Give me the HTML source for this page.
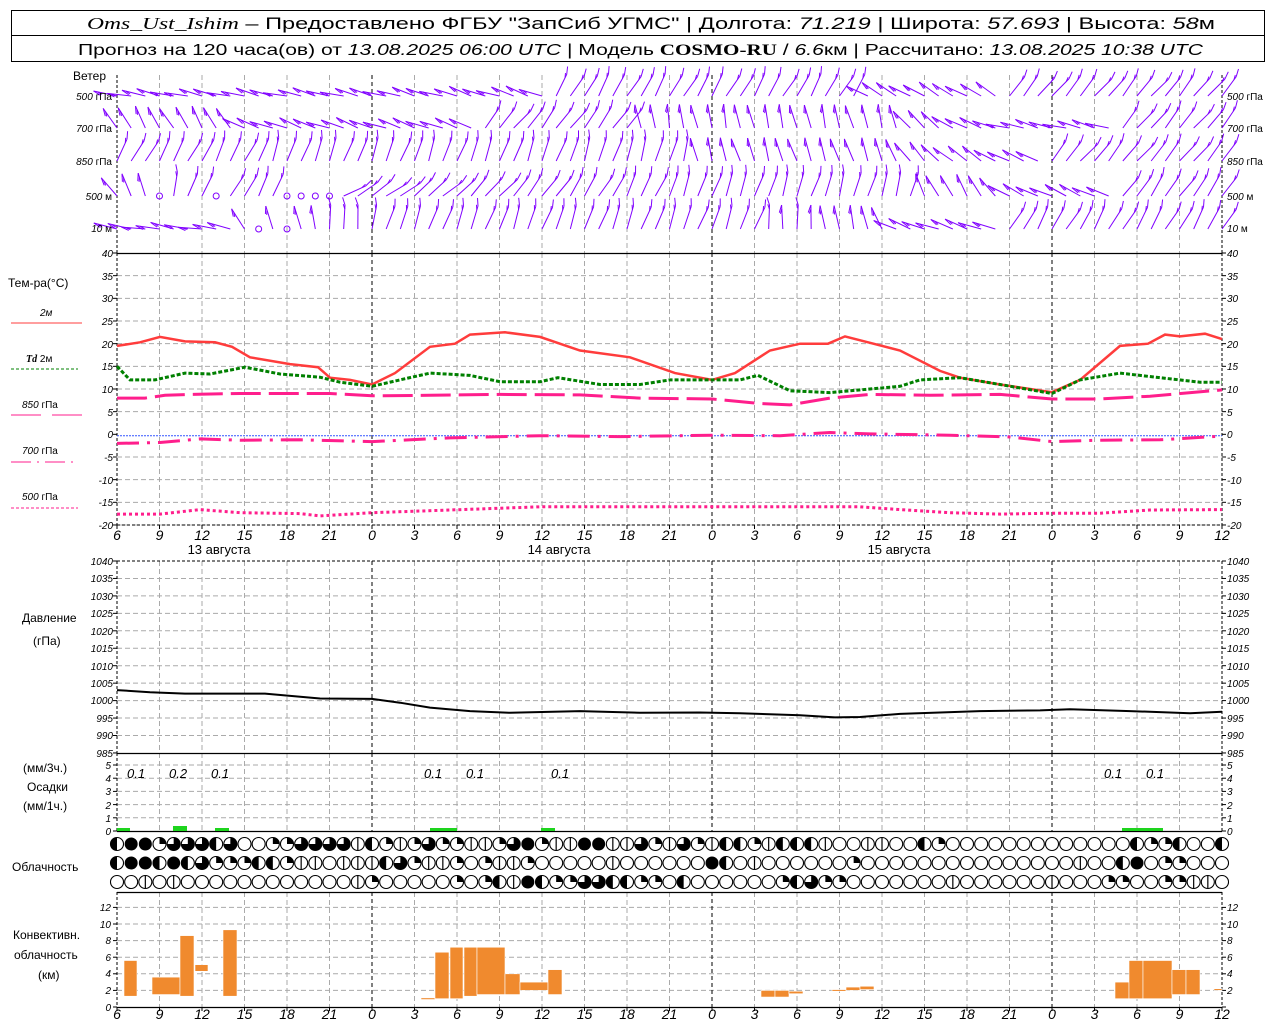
<!DOCTYPE html>
<html><head><meta charset="utf-8">
<style>
html,body{margin:0;padding:0;background:#fff;}
svg{display:block;}
text{font-family:"Liberation Sans","DejaVu Sans",sans-serif;fill:#000;}
.ax{font-size:10px;font-style:italic;}
.tm{font-size:14px;font-style:italic;}
.lb{font-size:12px;}
.h{font-size:17px;}
.h2{font-size:16px;}
</style></head>
<body>
<svg id="s" width="1280" height="1024" viewBox="0 0 1280 1024" xmlns="http://www.w3.org/2000/svg">
<rect x="0" y="0" width="1280" height="1024" fill="#fff"/>
<rect x="11.5" y="10.5" width="1253" height="51" fill="none" stroke="#000"/>
<line x1="11" y1="35.5" x2="1264" y2="35.5" stroke="#000"/>
<text x="87" y="29" class="h" textLength="1128" lengthAdjust="spacingAndGlyphs"><tspan font-family="Liberation Serif" font-style="italic">Oms_Ust_Ishim</tspan> – Предоставлено ФГБУ "ЗапСиб УГМС" | Долгота: <tspan font-style="italic">71.219</tspan> | Широта: <tspan font-style="italic">57.693</tspan> | Высота: <tspan font-style="italic">58</tspan>м</text>
<text x="78" y="55" class="h2" textLength="1125" lengthAdjust="spacingAndGlyphs">Прогноз на 120 часа(ов) от <tspan font-style="italic">13.08.2025 06:00 UTC</tspan>  | Модель <tspan font-family="Liberation Serif" font-weight="bold">COSMO-RU</tspan> / <tspan font-style="italic">6.6</tspan>км | Рассчитано: <tspan font-style="italic">13.08.2025 10:38 UTC</tspan></text>

<g id="grid"></g>
<g id="data"></g>

<text x="73" y="80" class="lb">Ветер</text>
<g class="ax">
<text x="112" y="100" text-anchor="end">500 <tspan font-style="normal">гПа</tspan></text>
<text x="112" y="132" text-anchor="end">700 <tspan font-style="normal">гПа</tspan></text>
<text x="112" y="165" text-anchor="end">850 <tspan font-style="normal">гПа</tspan></text>
<text x="112" y="200" text-anchor="end">500 <tspan font-style="normal">м</tspan></text>
<text x="112" y="232" text-anchor="end">10 <tspan font-style="normal">  м</tspan></text>
<text x="1227" y="100">500 <tspan font-style="normal">гПа</tspan></text>
<text x="1227" y="132">700 <tspan font-style="normal">гПа</tspan></text>
<text x="1227" y="165">850 <tspan font-style="normal">гПа</tspan></text>
<text x="1227" y="200">500 <tspan font-style="normal">м</tspan></text>
<text x="1227" y="232">10 <tspan font-style="normal">  м</tspan></text>
</g>
<text x="8" y="287" class="lb">Тем-ра(°C)</text>
<text x="40" y="316" class="ax" font-style="normal">2м</text>
<line x1="11" y1="323" x2="82" y2="323" stroke="#ff3c3c"/>
<text x="26" y="362" class="ax"><tspan font-family="Liberation Serif" font-weight="bold">Td</tspan> <tspan font-style="normal">  2м</tspan></text>
<line x1="11" y1="369" x2="78" y2="369" stroke="#008000" stroke-dasharray="3 2"/>
<text x="22" y="408" class="ax">850 <tspan font-style="normal"> гПа</tspan></text>
<line x1="11" y1="415" x2="41" y2="415" stroke="#ff1e8c"/><line x1="52" y1="415" x2="82" y2="415" stroke="#ff1e8c"/>
<text x="22" y="454" class="ax">700 <tspan font-style="normal">гПа</tspan></text>
<line x1="11" y1="462" x2="78" y2="462" stroke="#ff1e8c" stroke-dasharray="20 6 2 6"/>
<text x="22" y="500" class="ax">500 <tspan font-style="normal">гПа</tspan></text>
<line x1="11" y1="508" x2="78" y2="508" stroke="#ff1e8c" stroke-dasharray="3 2"/>
<text x="22" y="622" class="lb">Давление</text>
<text x="33" y="645" class="lb">(гПа)</text>
<text x="23" y="772" class="lb">(мм/3ч.)</text>
<text x="27" y="791" class="lb">Осадки</text>
<text x="23" y="810" class="lb">(мм/1ч.)</text>
<text x="12" y="871" class="lb">Облачность</text>
<text x="13" y="939" class="lb">Конвективн.</text>
<text x="14" y="959" class="lb">облачность</text>
<text x="38" y="979" class="lb">(км)</text>

<g class="ax">
<text x="113" y="257" text-anchor="end">40</text><text x="113" y="280" text-anchor="end">35</text><text x="113" y="302" text-anchor="end">30</text><text x="113" y="325" text-anchor="end">25</text><text x="113" y="348" text-anchor="end">20</text><text x="113" y="370" text-anchor="end">15</text><text x="113" y="393" text-anchor="end">10</text><text x="113" y="416" text-anchor="end">5</text><text x="113" y="438" text-anchor="end">0</text><text x="113" y="461" text-anchor="end">-5</text><text x="113" y="484" text-anchor="end">-10</text><text x="113" y="506" text-anchor="end">-15</text><text x="113" y="529" text-anchor="end">-20</text>
<text x="1227" y="257">40</text><text x="1227" y="280">35</text><text x="1227" y="302">30</text><text x="1227" y="325">25</text><text x="1227" y="348">20</text><text x="1227" y="370">15</text><text x="1227" y="393">10</text><text x="1227" y="416">5</text><text x="1227" y="438">0</text><text x="1227" y="461">-5</text><text x="1227" y="484">-10</text><text x="1227" y="506">-15</text><text x="1227" y="529">-20</text>
<text x="113" y="565" text-anchor="end">1040</text><text x="113" y="582" text-anchor="end">1035</text><text x="113" y="600" text-anchor="end">1030</text><text x="113" y="617" text-anchor="end">1025</text><text x="113" y="635" text-anchor="end">1020</text><text x="113" y="652" text-anchor="end">1015</text><text x="113" y="670" text-anchor="end">1010</text><text x="113" y="687" text-anchor="end">1005</text><text x="113" y="704" text-anchor="end">1000</text><text x="113" y="722" text-anchor="end">995</text><text x="113" y="739" text-anchor="end">990</text><text x="113" y="757" text-anchor="end">985</text>
<text x="1227" y="565">1040</text><text x="1227" y="582">1035</text><text x="1227" y="600">1030</text><text x="1227" y="617">1025</text><text x="1227" y="635">1020</text><text x="1227" y="652">1015</text><text x="1227" y="670">1010</text><text x="1227" y="687">1005</text><text x="1227" y="704">1000</text><text x="1227" y="722">995</text><text x="1227" y="739">990</text><text x="1227" y="757">985</text>
<text x="111" y="769" text-anchor="end">5</text><text x="111" y="782" text-anchor="end">4</text><text x="111" y="795" text-anchor="end">3</text><text x="111" y="809" text-anchor="end">2</text><text x="111" y="822" text-anchor="end">1</text><text x="111" y="835" text-anchor="end">0</text>
<text x="1227" y="769">5</text><text x="1227" y="782">4</text><text x="1227" y="795">3</text><text x="1227" y="809">2</text><text x="1227" y="822">1</text><text x="1227" y="835">0</text>
<text x="111" y="911" text-anchor="end">12</text><text x="111" y="928" text-anchor="end">10</text><text x="111" y="944" text-anchor="end">8</text><text x="111" y="961" text-anchor="end">6</text><text x="111" y="977" text-anchor="end">4</text><text x="111" y="994" text-anchor="end">2</text><text x="111" y="1011" text-anchor="end">0</text>
<text x="1227" y="911">12</text><text x="1227" y="928">10</text><text x="1227" y="944">8</text><text x="1227" y="961">6</text><text x="1227" y="977">4</text><text x="1227" y="994">2</text>
</g>
<g class="tm" style="font-size:13px">
<text x="127" y="778">0.1</text><text x="169" y="778">0.2</text><text x="211" y="778">0.1</text><text x="424" y="778">0.1</text><text x="466" y="778">0.1</text><text x="551" y="778">0.1</text><text x="1104" y="778">0.1</text><text x="1146" y="778">0.1</text>
</g>
<g class="tm" text-anchor="middle">
<text x="117" y="540">6</text><text x="159.5" y="540">9</text><text x="202" y="540">12</text><text x="244.5" y="540">15</text><text x="287" y="540">18</text><text x="329.5" y="540">21</text><text x="372" y="540">0</text><text x="414.5" y="540">3</text><text x="457" y="540">6</text><text x="499.5" y="540">9</text><text x="542" y="540">12</text><text x="584.5" y="540">15</text><text x="627" y="540">18</text><text x="669.5" y="540">21</text><text x="712" y="540">0</text><text x="754.5" y="540">3</text><text x="797" y="540">6</text><text x="839.5" y="540">9</text><text x="882" y="540">12</text><text x="924.5" y="540">15</text><text x="967" y="540">18</text><text x="1009.5" y="540">21</text><text x="1052" y="540">0</text><text x="1094.5" y="540">3</text><text x="1137" y="540">6</text><text x="1179.5" y="540">9</text><text x="1222" y="540">12</text>
<text x="117" y="1019">6</text><text x="159.5" y="1019">9</text><text x="202" y="1019">12</text><text x="244.5" y="1019">15</text><text x="287" y="1019">18</text><text x="329.5" y="1019">21</text><text x="372" y="1019">0</text><text x="414.5" y="1019">3</text><text x="457" y="1019">6</text><text x="499.5" y="1019">9</text><text x="542" y="1019">12</text><text x="584.5" y="1019">15</text><text x="627" y="1019">18</text><text x="669.5" y="1019">21</text><text x="712" y="1019">0</text><text x="754.5" y="1019">3</text><text x="797" y="1019">6</text><text x="839.5" y="1019">9</text><text x="882" y="1019">12</text><text x="924.5" y="1019">15</text><text x="967" y="1019">18</text><text x="1009.5" y="1019">21</text><text x="1052" y="1019">0</text><text x="1094.5" y="1019">3</text><text x="1137" y="1019">6</text><text x="1179.5" y="1019">9</text><text x="1222" y="1019">12</text>
</g>
<g class="lb" style="font-size:13px" text-anchor="middle">
<text x="219" y="554">13 августа</text><text x="559" y="554">14 августа</text><text x="899" y="554">15 августа</text>
</g>
</svg>
<script>
var NS="http://www.w3.org/2000/svg";
var G=document.getElementById("grid"),D=document.getElementById("data");
function el(p,t,a){var e=document.createElementNS(NS,t);for(var k in a)e.setAttribute(k,a[k]);p.appendChild(e);return e;}
function ln(p,x1,y1,x2,y2,st,w,da){var a={x1:x1,y1:y1,x2:x2,y2:y2,stroke:st,"stroke-width":w||1};if(da)a["stroke-dasharray"]=da;return el(p,"line",a);}
var X0=117,X1=1222,PH=14.1667;
function hg(y){ln(G,X0,y,X1,y,"#aaa",1,"5 3");}
for(var t=35;t>=-20;t-=5){if(t!=0)hg(253+(40-t)*4.533);}
for(var p=1035;p>985;p-=5)hg(561+(1040-p)*3.49);
for(var q=1;q<=5;q++)hg(831-q*13.2);
for(var c=2;c<=12;c+=2)hg(1007-c*8.3);
var secs=[[75,253],[253,525],[561,753],[753,831],[892,1007]];
for(var i=0;i<=26;i++){var x=X0+i*42.5;var day=(i==6||i==14||i==22);
 secs.forEach(function(s){ if(i==0||i==26){ln(G,x,s[0],x,s[1],"#000",1,"3 2");} else ln(G,x,s[0],x,s[1],day?"#000":"#aaa",1,day?"4 3":"5 3");});
}
ln(G,X0,253.5,X1,253.5,"#000",1.2);ln(G,X0,561,X1,561,"#000",1,"3 2");
ln(G,X0,753.5,X1,753.5,"#000",1.2);ln(G,X0,831.5,X1,831.5,"#000",1.2);ln(G,X0,892.5,X1,892.5,"#000",1.2);ln(G,X0,1007.5,X1,1007.5,"#000",1.2);
ln(G,X0,525,X1,525,"#000",1,"3 2");
ln(G,X0,435.7,X1,435.7,"#3355ff",1,"2 1");
function tk(y){ln(G,X0-4,y,X0,y,"#000",1);ln(G,X1,y,X1+4,y,"#000",1);}
for(var t=40;t>=-20;t-=5)tk(253+(40-t)*4.533);
for(var p=1040;p>=985;p-=5)tk(561+(1040-p)*3.49);
for(var q=0;q<=5;q++)tk(831-q*13.2);
for(var c=0;c<=12;c+=2)tk(1007-c*8.3);
for(var i=0;i<=26;i++){var x=X0+i*42.5;ln(G,x,525,x,529,"#000",1);ln(G,x,1007,x,1011,"#000",1);}

function path(pts,fy,st,w,da){var d="";pts.forEach(function(p,k){d+=(k?"L":"M")+p[0]+" "+fy(p[1]).toFixed(1);});var a={d:d,fill:"none",stroke:st,"stroke-width":w};if(da)a["stroke-dasharray"]=da;el(D,"path",a);}
var ty=function(t){return 253+(40-t)*4.533;};
path([[117,19.5],[140,20.3],[160,21.5],[185,20.5],[215,20.3],[232,19.3],[250,17],[290,15.5],[318,14.8],[330,12.5],[350,12],[372,11],[395,13.5],[430,19.3],[455,20],[470,22],[505,22.5],[540,21.5],[580,18.5],[630,17],[675,13.5],[712,12],[735,13.5],[770,18.5],[800,20],[828,20],[845,21.6],[870,20.2],[900,18.5],[940,14],[960,12.5],[1000,11],[1052,9.3],[1080,12],[1120,19.5],[1148,20],[1165,22],[1180,21.6],[1205,22.2],[1222,21]],ty,"#ff3c3c",2.5);
path([[117,15],[130,12],[155,12],[185,13.5],[210,13.3],[245,14.8],[280,13.3],[320,12.6],[340,11.5],[372,10.6],[400,12],[430,13.5],[470,13],[500,11.6],[540,11.6],[558,12.5],[600,11],[640,11],[670,12],[712,12],[740,12],[758,13],[790,9.6],[830,9.2],[870,10],[900,10.6],[920,12],[960,12.5],[1000,11],[1052,9],[1080,12],[1120,13.5],[1160,12.5],[1200,11.5],[1222,11.5]],ty,"#008000",3,"4 2");
path([[117,8],[145,8],[165,8.6],[190,8.8],[240,9],[330,9],[372,8.5],[430,8.6],[500,8.8],[580,8.7],[640,8],[712,7.8],[760,6.8],[790,6.5],[830,8],[870,8.8],[930,8.6],[1000,8.8],[1052,7.8],[1100,7.8],[1150,8.4],[1222,9.8]],ty,"#ff1e8c",3,"30 8");
path([[117,-2],[160,-1.8],[200,-1],[240,-1.3],[300,-1.2],[372,-1.6],[450,-0.8],[540,-0.3],[620,-0.5],[712,-0.2],[780,-0.3],[830,0.4],[870,0.1],[950,-0.2],[1010,-0.6],[1052,-1.6],[1100,-1.3],[1160,-1.2],[1222,-0.4]],ty,"#ff1e8c",3,"22 8 3 8");
path([[117,-17.6],[160,-17.6],[200,-16.6],[240,-17.3],[300,-17.5],[320,-18],[372,-17.3],[450,-16.7],[540,-16],[620,-16],[712,-16],[800,-16],[860,-16],[900,-16.6],[950,-17.3],[1000,-17.6],[1052,-17.4],[1100,-17.4],[1150,-16.7],[1222,-16.6]],ty,"#ff1e8c",3,"3 3");
path([[117,1003],[150,1002.4],[185,1002],[265,1002],[320,1000.6],[372,1000.5],[400,999.4],[430,998],[470,997],[510,996.5],[580,997],[640,996.5],[700,996.6],[740,996.4],[800,995.8],[835,995.2],[860,995.3],[900,996.2],[980,997],[1040,997.2],[1070,997.5],[1130,997],[1190,996.4],[1222,996.8]],function(p){return 561+(1040-p)*3.49;},"#000",2);
[[117,130],[173,187],[215,229],[430,457],[541,555],[1122,1150],[1150,1163]].forEach(function(b,k){el(D,"rect",{x:b[0],y:k==1?826:828,width:b[1]-b[0],height:k==1?5:3,fill:"#1ed41e"});});
var cb=[[124,137,1.3,5.6],[152,180,1.5,3.6],[180,194,1.3,8.6],[195,208,4.3,5.1],[223,237,1.3,9.3],[421,435,0.9,1.1],[435,449,1,6.6],[450,463,1,7.2],[464,477,1.3,7.2],[477,505,1.5,7.2],[505,520,1.5,4],[520,548,2,3],[548,562,1.5,4.5],[761,775,1.2,2],[775,789,1.2,2],[789,803,1.6,1.9],[832,846,1.9,2.1],[846,860,2,2.4],[860,874,2.1,2.5],[1115,1129,1,3],[1129,1143,1,5.6],[1143,1172,1,5.6],[1172,1186,1.5,4.5],[1186,1200,1.5,4.5],[1214,1222,2,2.2]];
cb.forEach(function(b){var y1=1007-b[3]*8.3,y2=1007-b[2]*8.3;el(D,"rect",{x:b[0],y:y1,width:b[1]-b[0],height:y2-y1,fill:"#f08a2e",stroke:"#fff","stroke-width":0.6});});
var rows=[
"4882666460022666614212622112682118811621"+"621442144410011004200000000000004224004",
"4884846222442110111462112021120000010000"+"008401000000200000000000000010048022000",
"0010100000000000012000002024184226644220"+"400000024622000000010000001000220022110"];
var ry=[844,863,882];
rows.forEach(function(r,ri){for(var i=0;i<79;i++){var cx=X0+i*PH,cy=ry[ri],R=6.5,v=+r[i];
 var g=el(D,"g",{});
 if(v==8)el(g,"circle",{cx:cx,cy:cy,r:R,fill:"#000"});
 else{el(g,"circle",{cx:cx,cy:cy,r:R,fill:"#fff"});
  if(v==4)el(g,"path",{d:"M"+cx+" "+(cy-R)+"A"+R+" "+R+" 0 0 0 "+cx+" "+(cy+R)+"Z",fill:"#000"});
  if(v==2)el(g,"path",{d:"M"+cx+" "+cy+"L"+cx+" "+(cy-R)+"A"+R+" "+R+" 0 0 1 "+(cx+R)+" "+cy+"Z",fill:"#000"});
  if(v==6)el(g,"path",{d:"M"+cx+" "+cy+"L"+cx+" "+(cy-R)+"A"+R+" "+R+" 0 1 1 "+(cx-R)+" "+cy+"Z",fill:"#000"});
  if(v==1)ln(g,cx,cy-R,cx,cy+R,"#000",1.2);
  el(g,"circle",{cx:cx,cy:cy,r:R,fill:"none",stroke:"#000","stroke-width":1.1});}
}});
var W=[[96,[[0,168],[18,165],[30,160],[31,60],[52,60],[53,150],[62,150],[63,50],[78,50]]],
 [128,[[0,120],[8,120],[9,160],[25,160],[26,50],[36,55],[37,100],[55,105],[56,130],[62,165],[70,165],[71,50],[78,50]]],
 [161,[[0,60],[10,65],[11,70],[30,70],[40,75],[41,105],[55,110],[56,130],[65,160],[66,50],[78,50]]],
 [196,[[0,130],[6,60],[15,65],[16,30],[40,70],[56,75],[57,115],[62,125],[63,155],[70,155],[71,55],[78,55]]],
 [229,[[0,170],[8,170],[9,120],[20,70],[45,70],[46,85],[54,110],[55,160],[62,160],[63,60],[78,60]]]];
function ang(arr,i){for(var k=0;k<arr.length-1;k++){if(i>=arr[k][0]&&i<=arr[k+1][0]){var f=(i-arr[k][0])/Math.max(1,arr[k+1][0]-arr[k][0]);return arr[k][1]+f*(arr[k+1][1]-arr[k][1]);}}return arr[arr.length-1][1];}
var calm={3:[3,7,12,13,14,15],4:[10,12]};
W.forEach(function(w,ri){var y=w[0];for(var i=0;i<79;i++){var x=X0+i*PH;
 if(calm[ri]&&calm[ri].indexOf(i)>=0){el(D,"circle",{cx:x,cy:y,r:3,fill:"none",stroke:"#8000ff"});continue;}
 var a=(ang(w[1],i)+6*Math.sin(i*1.7+ri))*Math.PI/180,L=24;
 var ex=x+L*Math.cos(a),ey=y-L*Math.sin(a);
 ln(D,x,y,ex.toFixed(1),ey.toFixed(1),"#8000ff",1);
 var b=a-70*Math.PI/180*(Math.cos(a)<0?-1:1);
 for(var n=0;n<2;n++){var sx=x+(L-n*4)*Math.cos(a),sy=y-(L-n*4)*Math.sin(a);
  var bl=n?5:8;ln(D,sx.toFixed(1),sy.toFixed(1),(sx+bl*Math.cos(b+Math.PI/2)).toFixed(1),(sy-bl*Math.sin(b+Math.PI/2)).toFixed(1),"#8000ff",1);}
}});
</script>
</body></html>
